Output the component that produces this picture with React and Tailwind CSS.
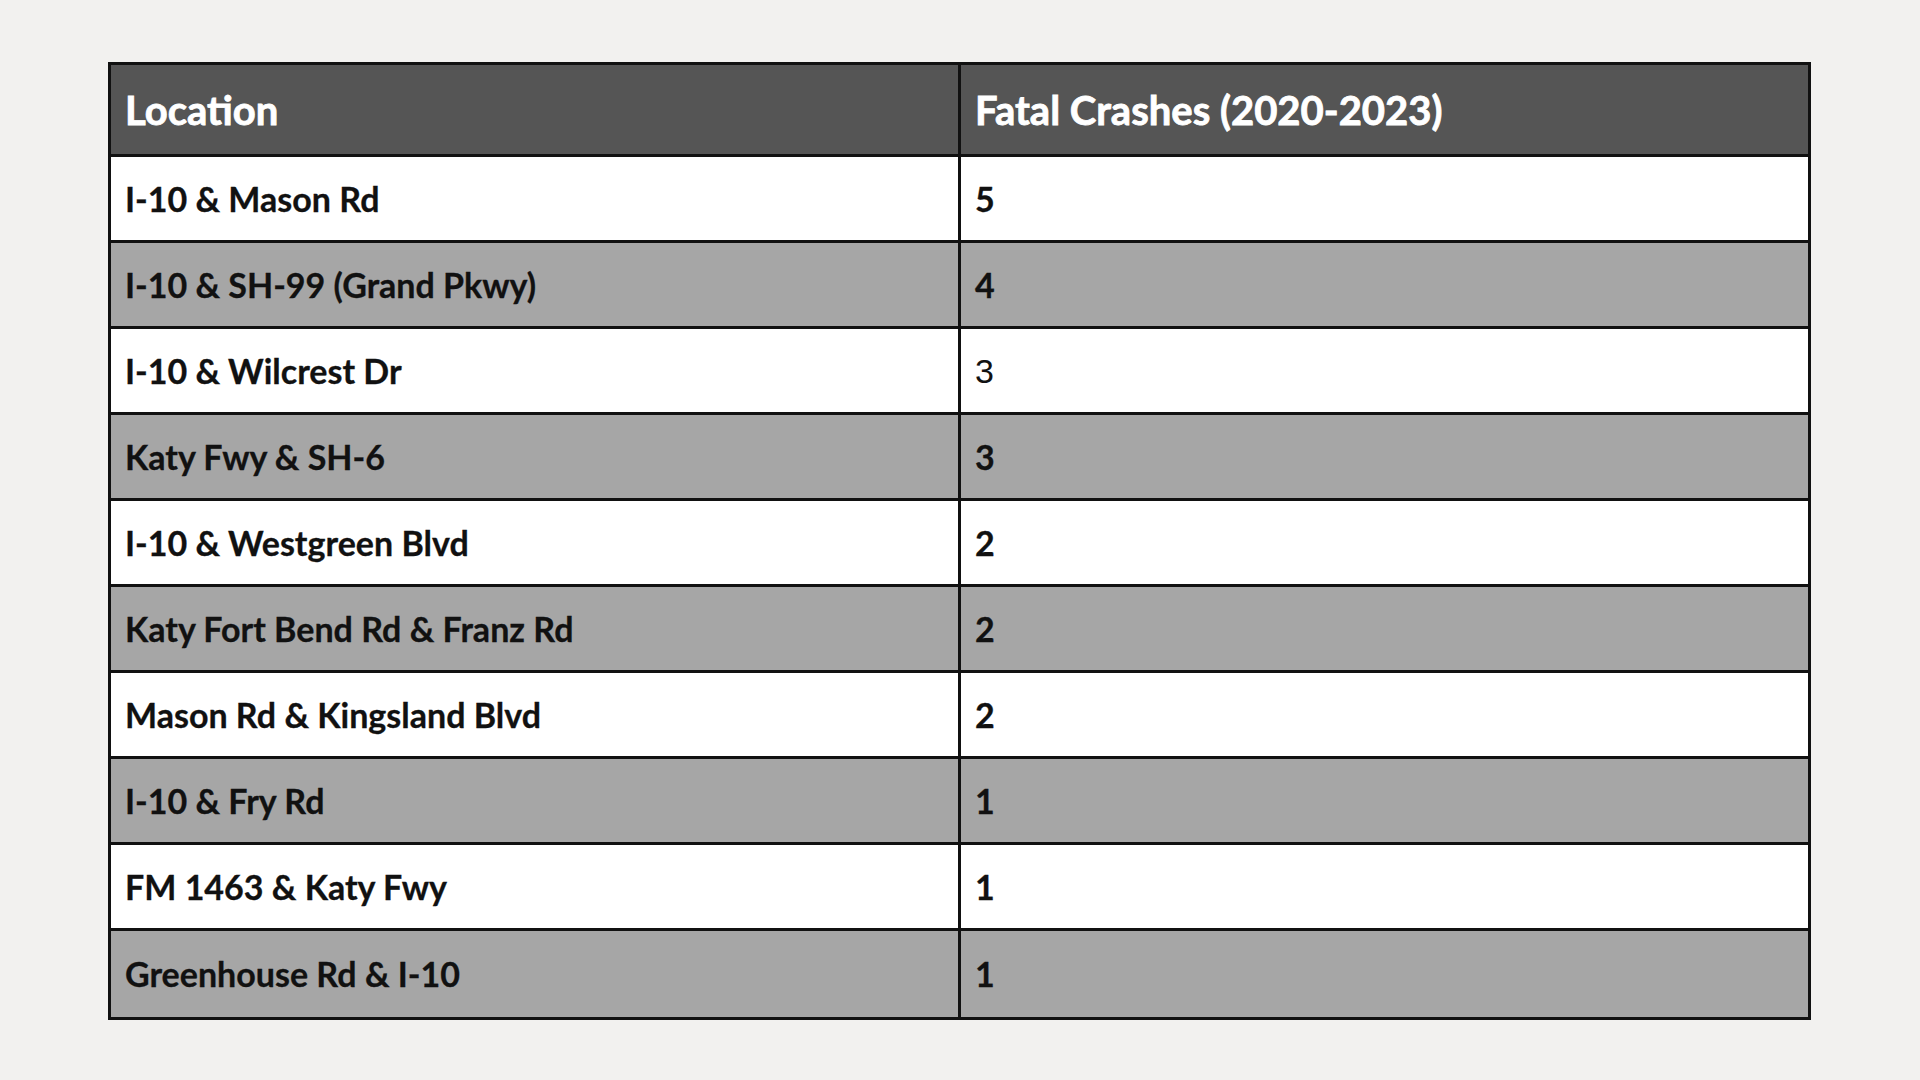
import React from "react";

const rows = [
  ["I-10 & Mason Rd", "5"],
  ["I-10 & SH-99 (Grand Pkwy)", "4"],
  ["I-10 & Wilcrest Dr", "3", true],
  ["Katy Fwy & SH-6", "3"],
  ["I-10 & Westgreen Blvd", "2"],
  ["Katy Fort Bend Rd & Franz Rd", "2"],
  ["Mason Rd & Kingsland Blvd", "2"],
  ["I-10 & Fry Rd", "1"],
  ["FM 1463 & Katy Fwy", "1"],
  ["Greenhouse Rd & I-10", "1"],
];

export default function App() {
  return (
    <div className="w-[1920px] h-[1080px] bg-[#f2f1ef] pt-[62px] pl-[108px] font-['Lato',sans-serif]">
      <div className="w-[1703px] border-[3px] border-[#111111]">
        <div className="grid grid-cols-[850px_1fr] h-[92px] bg-[#555555] border-b-[3px] border-[#111111]">
          <div className="flex items-center pl-[14px] border-r-[3px] border-[#111111] text-white text-[40px] font-bold leading-none [-webkit-text-stroke:0.8px_white]">
            Location
          </div>
          <div className="flex items-center pl-[14px] text-white text-[40px] font-bold leading-none [-webkit-text-stroke:0.8px_white]">
            Fatal Crashes (2020-2023)
          </div>
        </div>
        {rows.map(([loc, n, plain], i) => (
          <div
            key={i}
            className={`grid grid-cols-[850px_1fr] h-[86px] ${i % 2 === 1 ? "bg-[#a6a6a6]" : "bg-white"} ${i < rows.length - 1 ? "border-b-[3px] border-[#111111]" : ""}`}
          >
            <div className="flex items-center pl-[14px] border-r-[3px] border-[#111111] text-[#111111] text-[34px] font-bold leading-none [-webkit-text-stroke:0.3px_#111111]">
              {loc}
            </div>
            <div className="flex items-center pl-[14px] text-[#111111] leading-none">
              {plain ? (
                <span className="font-['Liberation_Sans',Arial,sans-serif] text-[34px] font-normal">{n}</span>
              ) : (
                <span className="text-[34px] font-bold [-webkit-text-stroke:0.3px_#111111]">{n}</span>
              )}
            </div>
          </div>
        ))}
      </div>
    </div>
  );
}
